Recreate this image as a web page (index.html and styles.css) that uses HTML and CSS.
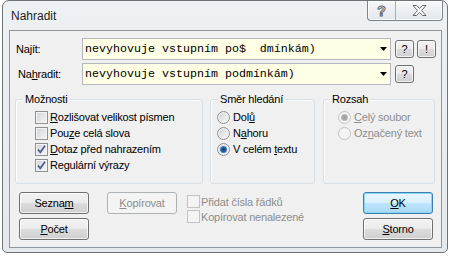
FILE: index.html
```html
<!DOCTYPE html>
<html lang="cs">
<head>
  <meta charset="UTF-8" />
  <title>Nahradit</title>
  <link rel="stylesheet" href="styles.css">
</head>

<body>
  <div class="window">
    <div class="titlebar">
      <span class="title">Nahradit</span>
      <div class="caption-buttons">
        <div class="cap-btn cap-help">?</div>
        <div class="cap-btn cap-close">
          <svg width="15" height="11" viewBox="0 0 15 11">
            <polygon points="1,0.5 4.5,0.5 7.5,3.5 10.5,0.5 14,0.5 9.5,5.5 14,10.5 10.5,10.5 7.5,7.5 4.5,10.5 1,10.5 5.5,5.5" fill="#fff" stroke="#5f666d" stroke-width="1" stroke-linejoin="round" />
          </svg>
        </div>
      </div>
    </div>

    <div class="client">
      <div class="field-row">
        <label class="field-label">Najít:</label>
        <div class="combo">
          <span class="combo-text">nevyhovuje vstupním po$  dmínkám)</span>
          <svg class="combo-arrow" width="7" height="4" viewBox="0 0 7 4"><polygon points="0,0 7,0 3.5,4" fill="#000" /></svg>
        </div>
        <button class="small-btn">?</button>
        <button class="small-btn">!</button>
      </div>

      <div class="field-row second">
        <label class="field-label"><span class="pad">Na<u>h</u>radit:</span></label>
        <div class="combo">
          <span class="combo-text">nevyhovuje vstupním podmínkám)</span>
          <svg class="combo-arrow" width="7" height="4" viewBox="0 0 7 4"><polygon points="0,0 7,0 3.5,4" fill="#000" /></svg>
        </div>
        <button class="small-btn">?</button>
      </div>

      <div class="groups">
        <div class="group group-options">
          <span class="group-title">Možnosti</span>
          <div class="opt-row"><span class="checkbox"></span><span><u>R</u>ozlišovat velikost písmen</span></div>
          <div class="opt-row"><span class="checkbox"></span><span>Pou<u>z</u>e celá slova</span></div>
          <div class="opt-row"><span class="checkbox checked"><svg width="11" height="11" viewBox="0 0 11 11"><polyline points="2,5.5 4.3,8.3 9,1.8" fill="none" stroke="#4a5c8f" stroke-width="1.7" /></svg></span><span><u>D</u>otaz před nahrazením</span></div>
          <div class="opt-row"><span class="checkbox checked"><svg width="11" height="11" viewBox="0 0 11 11"><polyline points="2,5.5 4.3,8.3 9,1.8" fill="none" stroke="#4a5c8f" stroke-width="1.7" /></svg></span><span>Re<u>g</u>ulární výrazy</span></div>
        </div>

        <div class="group group-direction">
          <span class="group-title">Směr hledání</span>
          <div class="opt-row"><span class="radio"></span><span>Dol<u>ů</u></span></div>
          <div class="opt-row"><span class="radio"></span><span>N<u>a</u>horu</span></div>
          <div class="opt-row"><span class="radio checked"></span><span>V celém <u>t</u>extu</span></div>
        </div>

        <div class="group group-scope">
          <span class="group-title">Rozsah</span>
          <div class="opt-row disabled"><span class="radio checked"></span><span><u>C</u>elý soubor</span></div>
          <div class="opt-row disabled"><span class="radio"></span><span>Oz<u>n</u>ačený text</span></div>
        </div>
      </div>

      <div class="bottom">
        <div class="btn-column">
          <button class="btn">Sezna<u>m</u></button>
          <button class="btn"><u>P</u>očet</button>
        </div>
        <button class="btn btn-copy" disabled><u>K</u>opírovat</button>
        <div class="extra-checks">
          <div class="small-row disabled"><span class="checkbox"></span><span>Přidat čísla řádků</span></div>
          <div class="small-row disabled"><span class="checkbox"></span><span>Kopírovat nenalezené</span></div>
        </div>
        <div class="btn-column right">
          <button class="btn btn-default"><u>O</u>K</button>
          <button class="btn"><u>S</u>torno</button>
        </div>
      </div>
    </div>
  </div>
</body>
</html>
```

FILE: styles.css
```css
body {
  margin: 0;
  background: #fff;
  font-family: "Liberation Sans", Arial, sans-serif;
  font-size: 11px;
  letter-spacing: -0.2px;
  color: #000;
}
u {
  text-underline-offset: 1px;
}
.window {
  margin-left: 2px;
  width: 444px;
  height: 251px;
  border: 1px solid #6d7379;
  border-radius: 7px 7px 5px 5px;
  background: linear-gradient(#eef1f4, #e5e8ec);
}
.titlebar {
  display: flex;
  justify-content: space-between;
  height: 29px;
}
.title {
  padding: 7px 0 0 8px;
  line-height: 16px;
  font-size: 12px;
  letter-spacing: 0;
  color: #1e1e1e;
}
.caption-buttons {
  display: flex;
  height: 19px;
  margin-right: 4px;
  border: 1px solid #7b848d;
  border-top: none;
  border-radius: 0 0 4px 4px;
  background: linear-gradient(#f6f8fa, #e3e7eb);
  box-shadow: inset 0 0 0 1px rgba(255,255,255,0.8);
}
.cap-btn {
  display: flex;
  align-items: center;
  justify-content: center;
}
.cap-help {
  width: 27px;
  border-right: 1px solid #a7aeb5;
  font: bold 14px "Liberation Sans", sans-serif;
  color: #fff;
  -webkit-text-stroke: 1px #5f666d;
}
.cap-close {
  width: 46px;
}
.client {
  box-sizing: border-box;
  margin-left: 6px;
  width: 433px;
  height: 218px;
  padding-top: 7px;
  border: 1px solid #8e969e;
  background: #f0f0f0;
}
.field-row {
  display: flex;
  align-items: center;
  height: 22px;
  padding-left: 6px;
}
.field-row.second {
  margin-top: 3px;
}
.field-label {
  width: 66px;
}
.field-label .pad {
  padding-left: 2px;
}
.combo {
  display: flex;
  align-items: center;
  width: 309px;
  height: 22px;
  box-sizing: border-box;
  border: 1px solid #b4b7be;
  background: #ffffe6;
  padding-left: 2px;
}
.combo-text {
  flex: 1;
  font-family: "Liberation Mono", monospace;
  font-size: 11.67px;
  letter-spacing: 0;
  white-space: pre;
}
.combo-arrow {
  margin-right: 3px;
}
.small-btn {
  width: 19px;
  height: 18px;
  margin-left: 4px;
  padding: 0;
  font: 11px "Liberation Sans", Arial, sans-serif;
  border: 1px solid #707070;
  border-radius: 3px;
  background: linear-gradient(#f2f2f2 0%, #ebebeb 50%, #dddddd 50%, #cfcfcf 100%);
  box-shadow: inset 0 0 0 1px rgba(255,255,255,0.7);
}
.small-btn + .small-btn {
  margin-left: 3px;
}
.groups {
  display: flex;
  margin-top: 7px;
  padding-left: 5px;
}
.group {
  display: flex;
  flex-direction: column;
  box-sizing: border-box;
  height: 85px;
  margin-top: 7px;
  border: 1px solid #d5dfe5;
  border-radius: 3px;
  box-shadow: inset 1px 1px 0 #fff;
}
.group-title {
  align-self: flex-start;
  margin: -8px 0 3px 7px;
  padding: 0 2px;
  line-height: 14px;
  background: #f0f0f0;
}
.group-options {
  width: 188px;
  padding-left: 19px;
}
.group-options .group-title {
  margin-left: -12px;
}
.group-direction {
  width: 105px;
  margin-left: 7px;
  padding-left: 6px;
}
.group-direction .group-title {
  margin-left: 1px;
}
.group-scope {
  width: 112px;
  margin-left: 8px;
  padding-left: 14px;
}
.group-scope .group-title {
  margin-left: -8px;
}
.opt-row {
  display: flex;
  align-items: center;
  height: 16px;
  gap: 3px;
}
.group-options .opt-row {
  gap: 2px;
}
.disabled {
  color: #8d8d8d;
}
.checkbox {
  position: relative;
  width: 13px;
  height: 13px;
  box-sizing: border-box;
  border: 1px solid #8e8f8f;
  background: linear-gradient(135deg, #cfd2d6, #f7f7f7);
  box-shadow: inset 0 0 0 1px #f4f4f4;
}
.checkbox svg {
  display: block;
}
.disabled .checkbox {
  border-color: #c3c3c3;
  background: #f4f4f4;
}
.radio {
  position: relative;
  width: 13px;
  height: 13px;
  box-sizing: border-box;
  border: 1px solid #8e8f8f;
  border-radius: 50%;
  background: linear-gradient(135deg, #d0d3d7, #f8f8f8);
  box-shadow: inset 0 0 0 1px #f4f4f4;
}
.radio.checked::after {
  content: "";
  position: absolute;
  left: 2px;
  top: 2px;
  width: 7px;
  height: 7px;
  border-radius: 50%;
  background: radial-gradient(circle, #0f3a66 0%, #2a6db0 55%, #86c6ef 100%);
}
.disabled .radio {
  border-color: #c3c3c3;
  background: #f4f4f4;
}
.disabled .radio.checked::after {
  background: radial-gradient(circle, #9a9a9a 0%, #b0b0b0 55%, #d8d8d8 100%);
}
.bottom {
  display: flex;
  margin-top: 8px;
  padding: 0 8px 0 9px;
}
.btn-column {
  display: flex;
  flex-direction: column;
  gap: 4px;
}
.btn-column.right {
  margin-left: auto;
}
.btn {
  box-sizing: border-box;
  width: 70px;
  height: 22px;
  padding: 0;
  font: 11px "Liberation Sans", Arial, sans-serif;
  letter-spacing: -0.2px;
  color: #000;
  border: 1px solid #707070;
  border-radius: 3px;
  background: linear-gradient(#f2f2f2 0%, #ebebeb 50%, #dddddd 50%, #cfcfcf 100%);
  box-shadow: inset 0 0 0 1px rgba(255,255,255,0.7);
}
.btn-copy {
  margin-left: 18px;
}
.btn:disabled {
  color: #8d8d8d;
  border-color: #adb2b5;
  background: #f4f4f4;
  box-shadow: none;
}
.btn-default {
  border-color: #3c7fb1;
  background: linear-gradient(#eaf6fd 0%, #d9f0fc 50%, #bee6fd 50%, #a7d9f5 100%);
  box-shadow: inset 0 0 0 1px #8ad6fb;
}
.extra-checks {
  margin-left: 10px;
  padding-top: 2px;
}
.small-row {
  display: flex;
  align-items: center;
  height: 15px;
  gap: 1px;
}
```
